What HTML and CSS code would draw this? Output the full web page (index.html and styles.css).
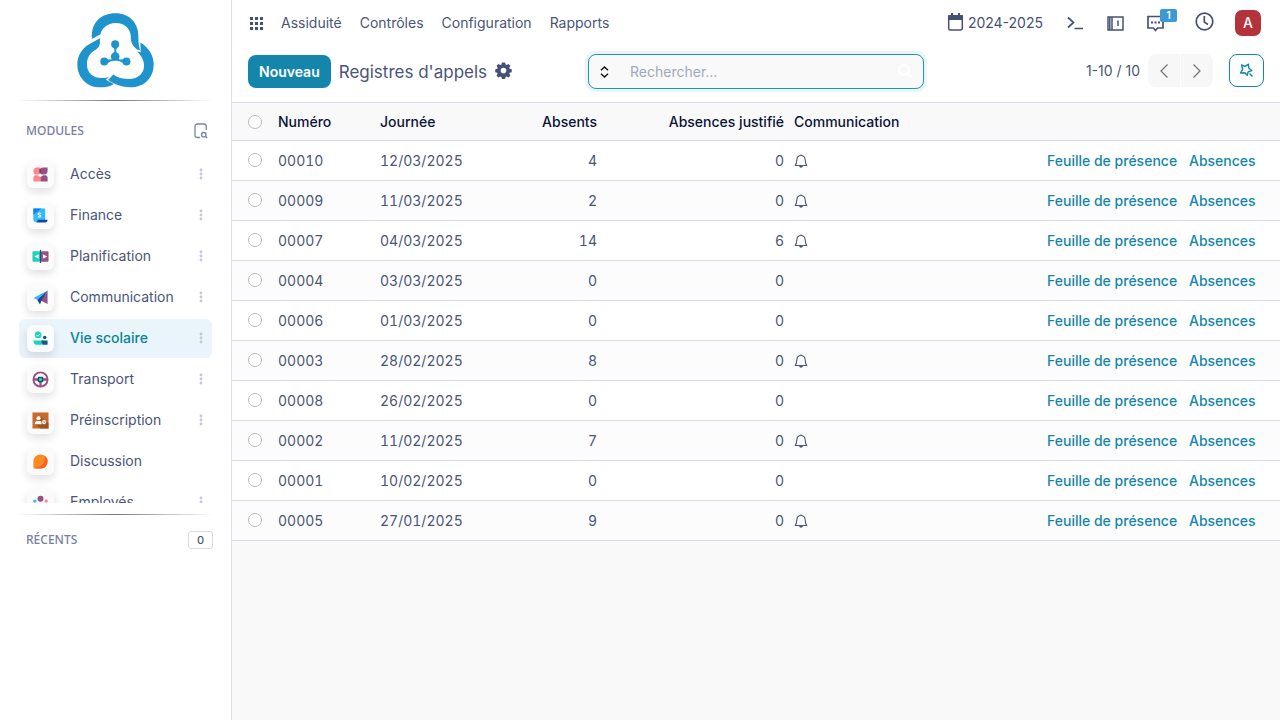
FILE: index.html
```html
<!DOCTYPE html>
<html lang="fr">
<head>
<meta charset="utf-8">
<meta name="viewport" content="width=device-width, initial-scale=1">
<title>Registres d'appels</title>
<link rel="stylesheet" href="styles.css">
</head>
<body>
<svg class="sprite" aria-hidden="true">
  <symbol id="dots" viewBox="0 0 4 12"><circle cx="2" cy="2" r="1.4"/><circle cx="2" cy="6" r="1.4"/><circle cx="2" cy="10" r="1.4"/></symbol>
  <symbol id="bell" viewBox="0 0 14 14"><path d="M7 .5V1.500M1.200 11.500C2.500 10 2.600 8.500 2.800 6 3 3.200 4.600 1.500 7 1.500S11 3.200 11.200 6C11.400 8.500 11.500 10 12.800 11.500Z" fill="none" stroke="currentColor" stroke-width="1.100" stroke-linejoin="round"/><path d="M5.200 12h3.600a1.800 1.800 0 0 1-3.600 0Z" fill="currentColor"/></symbol>
</svg>
<div class="app">
  <aside class="sidebar">
    <a class="logo" href="#" aria-label="Accueil">
      <svg width="77" height="75" viewBox="231 37 232 226" fill="#1f93cb"><path d="M276 115C272 65 305 38 346 38C392 38 418 70 416 112C416 128 418 138 421 149L412 147C400 138 393 128 393 108C393 85 375 67 348 67C322 67 303 86 302 101Z"/><path d="M422 126C448 142 462 165 462 192C462 235 430 261 392 261C365 260 345 253 325 239L340 222C352 231 370 236 388 236C415 236 433 218 433 196C433 180 425 165 412 153L423 155Z"/><path d="M300 113V128C298 142 290 145 280 152C266 162 261 176 261 192C261 218 280 233 305 233C315 233 322 231 328 228L318 238L342 251C330 259 315 261 300 261C262 261 232 232 232 192C232 168 244 146 266 132Z"/><circle cx="346" cy="131" r="12"/><circle cx="313" cy="183" r="12"/><circle cx="380" cy="183" r="12"/><circle cx="346" cy="168" r="13"/><path d="M341 141C345 149 345 152 341 160H352C348 152 348 149 352 141ZM322 176C331 178 334 177 339 173L346 181C337 180 333 182 324 188ZM371 176C362 178 359 177 354 173L347 181C356 180 360 182 369 188Z"/></svg>
    </a>
    <div class="rule"></div>
    <div class="side-head">
      <h2>MODULES</h2>
      <button class="plain" aria-label="Rechercher un module"><svg width="14" height="16" viewBox="0 0 14 16" fill="none" stroke="#7b83ab" stroke-width="1.300"><path d="M6 14.500H3.500A2.500 2.500 0 0 1 1 12V3.500A2.500 2.500 0 0 1 3.500 1h6.500A2.500 2.500 0 0 1 12.300 3.500V7"/><circle cx="9.800" cy="11.700" r="2.200"/><path d="m11.500 13.300 1.700 1.700"/></svg></button>
    </div>
    <nav class="modules" aria-label="Modules">
      <div class="module"><a href="#"><span class="tile"><svg viewBox="0 0 18 18"><path d="M1.500 5.500a4 4 0 0 1 4-4h3.500v6L7.500 9H3a4 4 0 0 1-1.500-3.500Z" fill="#fc868b"/><path d="M8 5.500a4 4 0 0 1 4-4h4.500v4A4 4 0 0 1 12.500 9h-2L8 7.500Z" fill="#985184"/><path d="M8 3.200h1.200v4L8 7.200Z" fill="#6d374a"/><path d="M1.500 12A2.500 2.500 0 0 1 4 9.800h2l3 1.800v4.900H1.500Z" fill="#fc868b"/><path d="M9 11.600l3-1.800h2A2.500 2.500 0 0 1 16.500 12v4.500H9Z" fill="#985184"/></svg></span><span class="name">Accès</span></a><button class="more" aria-label="Options Accès"><svg><use href="#dots"/></svg></button></div>
      <div class="module"><a href="#"><span class="tile"><svg viewBox="0 0 18 18"><path d="M1.500 1.500H14v12.800h1.500V16H4a2.500 2.500 0 0 1-2.500-2.500Z" fill="#2ebcfa"/><path d="M1.500 1.500H10L1.500 8Z" fill="#0b80f0"/><path d="M6 13.500h10.500C16.500 15 15.500 16.500 14 16.500H4C5.500 16.500 6 15 6 13.500Z" fill="#17479b"/><path d="M9.300 6.800c-2-1-3.200 0-2.800 1 .5 1 2.600.5 2.800 1.700.1 1.200-1.700 1.500-3 .6" fill="none" stroke="#fff" stroke-width="1.200"/></svg></span><span class="name">Finance</span></a><button class="more" aria-label="Options Finance"><svg><use href="#dots"/></svg></button></div>
      <div class="module"><a href="#"><span class="tile"><svg viewBox="0 0 18 18"><rect x=".5" y="3.500" width="8" height="11" rx="1" fill="#1ad3bb"/><rect x="9.500" y="3.500" width="8" height="11" rx="1" fill="#985184"/><path d="M8.300 2h1.400v14H8.300Z" fill="#155a82"/><path d="M7 6.500v5L2.500 9ZM11.500 6.500v5L16 9Z" fill="#fff"/></svg></span><span class="name">Planification</span></a><button class="more" aria-label="Options Planification"><svg><use href="#dots"/></svg></button></div>
      <div class="module"><a href="#"><span class="tile"><svg viewBox="0 0 18 18"><path d="M16.500 1.500V16L9.500 12.500Z" fill="#985184"/><path d="M16.500 1.500L1.500 9.500l4 2Z" fill="#2ebcfa"/><path d="M16.500 1.500L5.500 11.500l3 5 1.500-4Z" fill="#17479b"/></svg></span><span class="name">Communication</span></a><button class="more" aria-label="Options Communication"><svg><use href="#dots"/></svg></button></div>
      <div class="module active"><a href="#" aria-current="page"><span class="tile"><svg viewBox="0 0 18 18"><circle cx="6.500" cy="5.200" r="3.500" fill="#1ad3bb"/><path d="m4.700 5.200 1.300 1.400L8.500 4" fill="none" stroke="#fff" stroke-width="1"/><circle cx="13.500" cy="8" r="1.900" fill="#155a72"/><path d="M1.500 11H13v4.500H5C3 15.500 1.500 14 1.500 11Z" fill="#1ad3bb"/><path d="M10 11h6.500v4.500H13C11 15.500 10 13.500 10 11Z" fill="#155a82"/></svg></span><span class="name">Vie scolaire</span></a><button class="more" aria-label="Options Vie scolaire"><svg><use href="#dots"/></svg></button></div>
      <div class="module"><a href="#"><span class="tile"><svg viewBox="0 0 18 18"><path d="M1.500 9h15M9 9v7" stroke="#985184" stroke-width="2.400"/><circle cx="9" cy="9" r="7.500" fill="none" stroke="#985184" stroke-width="2"/><rect x="6" y="6" width="6" height="6" rx="1.500" fill="#194b62"/><circle cx="9" cy="9" r="1.800" fill="#1ad3bb"/></svg></span><span class="name">Transport</span></a><button class="more" aria-label="Options Transport"><svg><use href="#dots"/></svg></button></div>
      <div class="module"><a href="#"><span class="tile"><svg viewBox="0 0 18 18"><path d="M.5.5h17v17H.5Z" fill="#c9692e"/><path d="m9 5 8.500 7v5.500H9L3 13Z" fill="#a1501f"/><circle cx="7" cy="6.600" r="2.200" fill="#fff"/><path d="M3 13c0-3 1.500-3.500 4-3.500s3.500.5 3.500 3.500Z" fill="#fff"/><circle cx="12.700" cy="10.700" r="2.600" fill="#fff" stroke="#a1501f" stroke-width=".6"/><path d="M12.500 9.500v1.500h1.300" fill="none" stroke="#a1501f" stroke-width=".7"/></svg></span><span class="name">Préinscription</span></a><button class="more" aria-label="Options Préinscription"><svg><use href="#dots"/></svg></button></div>
      <div class="module"><a href="#"><span class="tile"><svg viewBox="0 0 18 18"><path d="M1.500 9a7.500 7.500 0 1 1 7.500 7.500H1.500Z" fill="#fb8b1e"/><path d="M13.500 3A7.500 7.500 0 0 1 9 16.500H3C11 14 14.500 10 13.500 3Z" fill="#f86126"/></svg></span><span class="name">Discussion</span></a></div>
      <div class="module"><a href="#"><span class="tile"><svg viewBox="0 0 18 18"><circle cx="9" cy="5" r="3.200" fill="#985184"/><circle cx="3" cy="7.500" r="1.800" fill="#2ebcfa"/><circle cx="15" cy="7.500" r="1.800" fill="#fc868b"/><path d="M1 10h5v6H3Z" fill="#2ebcfa"/><path d="M17 10h-5v6h3Z" fill="#fc868b"/><path d="M5 10h8v6H5Z" fill="#985184"/></svg></span><span class="name">Employés</span></a><button class="more" aria-label="Options Employés"><svg><use href="#dots"/></svg></button></div>
    </nav>
    <div class="rule"></div>
    <div class="side-head recent"><h2>RÉCENTS</h2><span class="count">0</span></div>
  </aside>

  <main class="main">
    <header class="topbar">
      <button class="plain" aria-label="Applications"><svg width="13" height="13" viewBox="0 0 13 13" fill="#45507a"><path d="M0 0h3v3H0zM5 0h3v3H5zM10 0h3v3h-3zM0 5h3v3H0zM5 5h3v3H5zM10 5h3v3h-3zM0 10h3v3H0zM5 10h3v3H5zM10 10h3v3h-3z"/></svg></button>
      <nav class="menu"><a href="#">Assiduité</a><a href="#">Contrôles</a><a href="#">Configuration</a><a href="#">Rapports</a></nav>
      <div class="tools">
        <button class="plain year"><svg width="17" height="20" viewBox="0 0 17 20"><path d="M1.700 4h13.600v12.500a1.500 1.500 0 0 1-1.500 1.500H3.200a1.500 1.500 0 0 1-1.500-1.500Z" fill="none" stroke="currentColor" stroke-width="1.500"/><path d="M1 4.500A1.500 1.500 0 0 1 2.500 3H4V1h2v2h5V1h2v2h1.500A1.500 1.500 0 0 1 16 4.500V8H1Z" fill="currentColor"/></svg>2024-2025</button>
        <button class="plain" aria-label="Console"><svg width="16" height="14" viewBox="0 0 16 14" fill="none" stroke="currentColor" stroke-width="1.700"><path d="m1 1.500 5.500 5L1 11.500M7.500 12.500H16"/></svg></button>
        <button class="plain" aria-label="Journal"><svg width="17" height="15" viewBox="0 0 17 15" fill="none" stroke="currentColor" stroke-width="1.500"><path d="M5 1h11v13H1V1h4v13M11 4.500V10M2.800 1v13"/></svg></button>
        <button class="plain messages" aria-label="Messages"><svg width="17" height="17" viewBox="0 0 17 17"><path d="M1 1.500h15V13h-5.500l-2 2.500-2-2.500H1Z" fill="none" stroke="currentColor" stroke-width="1.700"/><path d="M4 6.500h2v2H4zM7.500 6.500h2v2h-2zM11 6.500h2v2h-2z" fill="currentColor"/></svg><span class="badge">1</span></button>
        <button class="plain clock" aria-label="Activités"><svg width="19" height="19" viewBox="0 0 19 19" fill="none" stroke="currentColor" stroke-width="1.700"><circle cx="9.500" cy="9.500" r="8.300"/><path d="M9.300 4v6l3.700 2.500"/></svg></button>
        <button class="avatar" aria-label="Compte">A</button>
      </div>
    </header>

    <section class="control">
      <div class="left">
        <button class="primary">Nouveau</button>
        <h1>Registres d'appels</h1>
        <button class="plain gear" aria-label="Actions"><svg width="17" height="17" viewBox="0 0 18 18"><path fill="#45507a" fill-rule="evenodd" d="M7.300.5h3.400l.5 2.200 1.100.5 2-1.200 2 2-1.200 2 .5 1.200 2.100.5v3.100l-2.100.5-.5 1.200 1.200 2-2 2-2-1.200-1.100.5-.5 2.200H7.300l-.5-2.200-1.200-.5-2 1.200-2-2 1.200-2-.5-1.200-2-.5V7.700l2-.5.500-1.200-1.200-2 2-2 2 1.200 1.200-.5ZM9 6a3 3 0 1 0 0 6 3 3 0 0 0 0-6Z"/></svg></button>
      </div>
      <div class="search">
        <button class="plain" aria-label="Filtres"><svg width="9" height="12" viewBox="0 0 9 12" fill="none" stroke="#111" stroke-width="1.400"><path d="m1 4.300 3.500-3.300L8 4.300M1 7.700 4.500 11 8 7.700"/></svg></button>
        <input type="text" placeholder="Rechercher..." aria-label="Rechercher">
        <svg width="15" height="15" viewBox="0 0 15 15" fill="none" stroke="#fff" stroke-width="2"><circle cx="6" cy="6" r="4.800"/><path d="m9.500 9.500 4.500 4.500"/></svg>
      </div>
      <div class="right">
        <span>1-10 / 10</span>
        <div class="pager">
          <button aria-label="Précédent"><svg width="8" height="14" viewBox="0 0 8 14"><path d="M7.500.5 1 7l6.500 6.500"/></svg></button>
          <button aria-label="Suivant"><svg width="8" height="14" viewBox="0 0 8 14"><path d="M.5.5 7 7 .5 13.500"/></svg></button>
        </div>
        <button class="star" aria-label="Favoris"><svg width="15" height="15" viewBox="0 0 15 15" fill="none" stroke="#0f86ab" stroke-width="1.400" stroke-linejoin="round"><path d="M2.600 2 6.200 3.300 9.500 1.200 9.700 5 12.800 7.500 9.200 8.800 8.200 12.300 5.700 9.800 1.500 10 3.600 6.300ZM10.500 10.500l3 3"/></svg></button>
      </div>
    </section>

    <table class="list">
      <colgroup><col class="c-check"><col class="c-num"><col class="c-day"><col class="c-abs"><col class="c-just"><col><col class="c-sheet"><col class="c-link"></colgroup>
      <thead><tr><th><input type="checkbox" aria-label="Tout sélectionner"></th><th>Numéro</th><th>Journée</th><th class="n">Absents</th><th class="n">Absences justifié</th><th>Communication</th><th></th><th></th></tr></thead>
      <tbody>
        <tr><td><input type="checkbox" aria-label="00010"></td><td>00010</td><td>12/03/2025</td><td class="n">4</td><td class="n">0</td><td><svg class="bell"><use href="#bell"/></svg></td><td><a href="#">Feuille de présence</a></td><td><a href="#">Absences</a></td></tr>
        <tr><td><input type="checkbox" aria-label="00009"></td><td>00009</td><td>11/03/2025</td><td class="n">2</td><td class="n">0</td><td><svg class="bell"><use href="#bell"/></svg></td><td><a href="#">Feuille de présence</a></td><td><a href="#">Absences</a></td></tr>
        <tr><td><input type="checkbox" aria-label="00007"></td><td>00007</td><td>04/03/2025</td><td class="n">14</td><td class="n">6</td><td><svg class="bell"><use href="#bell"/></svg></td><td><a href="#">Feuille de présence</a></td><td><a href="#">Absences</a></td></tr>
        <tr><td><input type="checkbox" aria-label="00004"></td><td>00004</td><td>03/03/2025</td><td class="n">0</td><td class="n">0</td><td></td><td><a href="#">Feuille de présence</a></td><td><a href="#">Absences</a></td></tr>
        <tr><td><input type="checkbox" aria-label="00006"></td><td>00006</td><td>01/03/2025</td><td class="n">0</td><td class="n">0</td><td></td><td><a href="#">Feuille de présence</a></td><td><a href="#">Absences</a></td></tr>
        <tr><td><input type="checkbox" aria-label="00003"></td><td>00003</td><td>28/02/2025</td><td class="n">8</td><td class="n">0</td><td><svg class="bell"><use href="#bell"/></svg></td><td><a href="#">Feuille de présence</a></td><td><a href="#">Absences</a></td></tr>
        <tr><td><input type="checkbox" aria-label="00008"></td><td>00008</td><td>26/02/2025</td><td class="n">0</td><td class="n">0</td><td></td><td><a href="#">Feuille de présence</a></td><td><a href="#">Absences</a></td></tr>
        <tr><td><input type="checkbox" aria-label="00002"></td><td>00002</td><td>11/02/2025</td><td class="n">7</td><td class="n">0</td><td><svg class="bell"><use href="#bell"/></svg></td><td><a href="#">Feuille de présence</a></td><td><a href="#">Absences</a></td></tr>
        <tr><td><input type="checkbox" aria-label="00001"></td><td>00001</td><td>10/02/2025</td><td class="n">0</td><td class="n">0</td><td></td><td><a href="#">Feuille de présence</a></td><td><a href="#">Absences</a></td></tr>
        <tr><td><input type="checkbox" aria-label="00005"></td><td>00005</td><td>27/01/2025</td><td class="n">9</td><td class="n">0</td><td><svg class="bell"><use href="#bell"/></svg></td><td><a href="#">Feuille de présence</a></td><td><a href="#">Absences</a></td></tr>
      </tbody>
    </table>
  </main>
</div>
</body>
</html>
```

FILE: styles.css
```css
* { box-sizing: border-box; }
body { margin: 0; font-family: Inter, "Liberation Sans", sans-serif; font-size: 14px; line-height: 20px; color: #4a5578; }
a { color: inherit; text-decoration: none; }
button { font: inherit; color: inherit; border: 0; padding: 0; background: none; cursor: pointer; }
svg { display: block; flex: none; }
.sprite { display: none; }
.plain { display: flex; align-items: center; color: #475175; }

.app { display: flex; min-height: 100vh; }

.sidebar { width: 232px; flex: none; display: flex; flex-direction: column; background: #fff; border-right: 1px solid #dcdde8; }
.logo { display: flex; justify-content: center; padding: 13px 0 12px; }
.rule { height: 1px; margin: 0 18px; flex: none; background: linear-gradient(90deg, transparent, #777, transparent); }
.side-head { display: flex; align-items: center; justify-content: space-between; padding: 20px 23px 13px 26px; }
.side-head h2 { margin: 0; font: 500 12px/20px "Noto Sans", sans-serif; color: #7580a3; }
.side-head.recent { padding: 15px 18px 14px 26px; }
.count { width: 25px; height: 18px; border: 1px solid #d8dbea; border-radius: 3px; font-size: 11px; font-weight: 500; line-height: 16px; text-align: center; }
.modules { display: flex; flex-direction: column; gap: 2px; height: 349px; margin-bottom: 11px; padding: 1px 19px 0; overflow: hidden; }
.module { display: flex; align-items: center; flex: none; height: 39px; border-radius: 6px; padding: 0 8px; }
.module a { display: flex; align-items: center; gap: 16px; flex: 1; }
.name { padding-bottom: 2px; }
.module.active { background: #e9f5fa; }
.module.active a { color: #0b8299; font-weight: 500; }
.tile { display: grid; place-items: center; width: 27px; height: 27px; border-radius: 6px; background: #fbfbfb; box-shadow: 0 4px 8px rgba(0, 0, 0, .12); }
.tile svg { width: 17px; height: 17px; }
.more { padding-bottom: 2px; }
.more svg { width: 4px; height: 12px; margin-right: 1px; fill: #c3c6dc; }

.main { flex: 1; min-width: 0; background: #f9f9f9; }
.topbar { display: flex; align-items: center; height: 46px; padding: 0 19px 0 18px; background: #fff; }
.menu { display: flex; gap: 18px; margin-left: 18px; }
.tools { display: flex; align-items: center; margin-left: auto; gap: 24px; }
.year { gap: 4px; }
.year svg { margin-bottom: 2px; }
.messages { position: relative; margin-left: -1px; }
.badge { position: absolute; left: 13px; top: -6px; width: 17px; height: 13px; border-radius: 2px; background: #3b9ad3; color: #fff; font-size: 10px; font-weight: 600; line-height: 13px; text-align: center; }
.clock { margin-left: 7px; padding-bottom: 3px; }
.avatar { width: 26px; height: 26px; margin-left: -3px; border-radius: 7px; background: #b4323a; color: #fff; font-weight: 500; }

.control { display: grid; grid-template-columns: 1fr 336px 1fr; align-items: start; padding: 8px 16px 13px; background: #fff; }
.left, .right { display: flex; align-items: center; }
.left { gap: 8px; height: 35px; }
.gear { padding-bottom: 3px; }
.primary { height: 33px; padding: 0 11px; border-radius: 8px; background: #1486ab; color: #fff; font-weight: 600; }
.left h1 { margin: 0; font-size: 17px; font-weight: 400; }
.search { display: flex; align-items: center; height: 35px; padding: 0 10px 0 11px; border: 1px solid #219a9c; border-radius: 8px; background: #f9f9f9; box-shadow: 0 0 0 3px #e7f5f9; }
.search input { flex: 1; min-width: 0; margin-left: 21px; padding: 0; border: 0; outline: 0; background: none; font: inherit; color: #475175; }
.search input::placeholder { color: #a2a6c0; opacity: 1; }
.right { justify-content: flex-end; }
.pager { display: flex; gap: 1px; margin: 0 16px 0 8px; }
.pager button { display: grid; place-items: center; width: 32px; height: 33px; background: #f7f7f7; }
.pager button:first-child { border-radius: 8px 0 0 8px; }
.pager button:last-child { border-radius: 0 8px 8px 0; }
.pager path { fill: none; stroke: #777; stroke-width: 1.3; }
.star { display: grid; place-items: center; width: 35px; height: 33px; border: 1px solid #1486ab; border-radius: 8px; }

.list { width: 100%; table-layout: fixed; border-collapse: separate; border-spacing: 0; background: #fff; font-variant-numeric: tabular-nums; }
.c-check { width: 41px; }
.c-num { width: 102px; }
.c-day { width: 97px; }
.c-abs { width: 130px; }
.c-just { width: 187px; }
.c-sheet { width: 142px; }
.c-link { width: 96px; }
.list th, .list td { padding: 0 5px; border-bottom: 1px solid #d9dbe8; text-align: left; white-space: nowrap; }
.list th { height: 39px; border-top: 1px solid #d9dbe8; background: #f9f9f9; color: #0b1437; font-weight: 500; }
.list td { height: 40px; }
.list tbody tr:nth-child(even) { background: #fcfcfc; }
.list .n { text-align: right; }
.list th:first-child, .list td:first-child { padding-left: 16px; }
.list td:first-child { padding-bottom: 2px; }
.list a { color: #1486ab; font-weight: 500; }
.list input { display: block; appearance: none; width: 14px; height: 14px; margin: 0; border: 1px solid #b9b9b9; border-radius: 50%; background: #fff; }
.bell { width: 14px; height: 14px; }
```
